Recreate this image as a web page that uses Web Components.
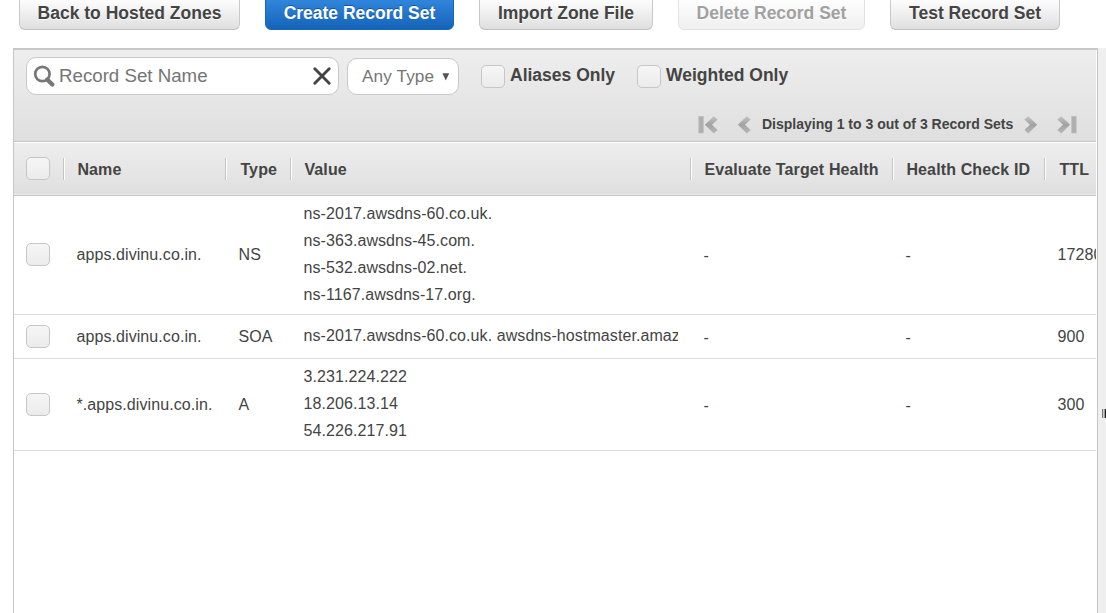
<!DOCTYPE html>
<html lang="en">
<head>
<meta charset="utf-8">
<title>Record Sets</title>
<style>
html, body { margin: 0; height: 100%; overflow: hidden; background: #fff; }
body { font-family: "Liberation Sans", Arial, sans-serif; color: #444; }
</style>
</head>
<body>
<zone-page></zone-page>
<script>
function define(name, markup) {
  const t = document.createElement('template');
  t.innerHTML = markup;
  customElements.define(name, class extends HTMLElement {
    constructor() {
      super();
      this.attachShadow({ mode: 'open' }).append(t.content.cloneNode(true));
    }
  });
}

define('action-button', `
<style>
:host { display: flex; box-sizing: border-box; height: 36px; padding: 5px 0 0 0; justify-content: center; align-items: flex-start;
  font: bold 17.5px/26px "Liberation Sans", Arial, sans-serif; color: #444; white-space: nowrap;
  border: 1px solid #c9c9c9; border-bottom-color: #bfbfbf; border-radius: 6px;
  background: linear-gradient(#fff, #fbfbfb 20%, #dfdfdf); text-shadow: 0 1px 0 #fff; }
:host([primary]) { color: #fff; border-color: #1568bd; background: linear-gradient(#3287dd, #2f83d9 20%, #1463b9); text-shadow: 0 -1px 0 #1158a5; }
:host([disabled]) { color: #a1a1a1; border-color: #e3e3e3; background: linear-gradient(#fff, #fdfdfd 20%, #efefef); }
</style><slot></slot>`);

define('check-box', `
<style>
:host { display: block; box-sizing: border-box; width: 24px; height: 23px; border: 1px solid #c6c6c6; border-radius: 5px;
  background: linear-gradient(#f6f6f6, #ebebeb); flex: none; }
</style>`);

define('search-field', `
<style>
:host { display: flex; box-sizing: border-box; width: 313px; height: 38px; border: 1px solid #c9c9c9; border-radius: 10px; background: #fff; align-items: center; padding: 0 6px 0 6px; }
span { flex: 1; padding-left: 4px; color: #757575; font-size: 18.7px; line-height: 36px; height: 36px; white-space: nowrap; }
svg { display: block; flex: none; }
</style>
<svg width="22" height="24" viewBox="0 0 22 24"><circle cx="9.4" cy="10" r="7.2" fill="none" stroke="#777" stroke-width="2.7"/><path d="M14.2 15.5L19.3 20.5" stroke="#777" stroke-width="4.2" stroke-linecap="round"/></svg>
<span><slot></slot></span>
<svg width="20" height="20" viewBox="0 0 20 20"><path d="M2.8 2.8L17.2 17.2M17.2 2.8L2.8 17.2" stroke="#444" stroke-width="2.9" stroke-linecap="round"/></svg>`);

define('type-select', `
<style>
:host { display: flex; box-sizing: border-box; width: 112px; height: 37px; border: 1px solid #c9c9c9; border-radius: 10px; background: #fff; padding: 0 0 0 14px; font-size: 17.2px; line-height: 35px; color: #757575; white-space: nowrap; letter-spacing: .1px; }
svg { margin: 14px 0 0 8px; }
</style><slot></slot><svg width="8" height="8" viewBox="0 0 8 8"><path d="M.4 .2H7.2L3.8 7.5Z" fill="#555"/></svg>`);

define('page-arrow', `
<style>
:host { display: block; width: 20px; height: 18px; }
:host([flip]) { transform: scaleX(-1); }
rect { display: none; }
:host([end]) rect { display: block; }
svg { display: block; }
</style>
<svg width="20" height="18" viewBox="0 0 20 18">
<defs><linearGradient id="g" x1="0" y1="0" x2="0" y2="1"><stop offset="0" stop-color="#c2c2c2"/><stop offset=".5" stop-color="#a2a2a2"/><stop offset="1" stop-color="#b8b8b8"/></linearGradient></defs>
<rect x=".8" y=".5" width="4.5" height="16.5" fill="#afafaf" stroke="#bdbdbd" stroke-width=".7"/>
<path d="M15.8 .3L19.6 3.6L14 8.8L19.6 14L15.8 17.4L6.8 8.8Z" fill="url(#g)"/></svg>`);

define('filter-bar', `
<style>
:host { display: block; box-sizing: border-box; height: 91px; padding: 7px 0 0 12px; background: linear-gradient(#eee, #dfdfdf); }
.filters { display: flex; height: 38px; }
type-select { margin: 1px 22px 0 8px; }
check-box { margin-top: 8px; }
b { font-size: 17.5px; line-height: 20px; padding-top: 8px; white-space: nowrap; }
.first { margin-left: 5px; width: 127px; }
.second { margin-left: 5px; }
.pager { display: flex; justify-content: flex-start; padding-left: 672px; margin-top: 21px; }
.count { width: 252px; margin: 0 10px 0 11px; font: bold 14px/17px "Liberation Sans", Arial, sans-serif; white-space: nowrap; }
.gap { margin-left: 13px; } .gap2 { margin-left: 13px; }
</style>
<div class="filters"><search-field>Record Set Name</search-field><type-select>Any Type</type-select>
<check-box></check-box><b class="first">Aliases Only</b><check-box></check-box><b class="second">Weighted Only</b></div>
<div class="pager"><page-arrow end></page-arrow><page-arrow class="gap"></page-arrow><div class="count">Displaying 1 to 3 out of 3 Record Sets</div>
<page-arrow flip></page-arrow><page-arrow flip end class="gap2"></page-arrow></div>`);

define('table-head', `
<style>
:host { display: grid; grid-template-columns: 49px 162px 65px 400px 202px 152px 90px; box-sizing: border-box; height: 55px; padding-top: 15px;
  border-top: 1px solid #c6c6c6; border-bottom: 1px solid #c6c6c6; box-shadow: inset 0 1px #fff, inset 0 -1px #e8e8e8;
  background: linear-gradient(#eee, #dfdfdf); font: bold 16px/26px "Liberation Sans", Arial, sans-serif; letter-spacing: .13px; }
div { height: 22px; margin-top: 1px; line-height: 24px; white-space: nowrap; border-left: 1px solid #c4c4c4; box-shadow: inset 1px 0 #fff; padding-left: 13.4px; }
.pick { padding-left: 12px; border: 0; box-shadow: none; margin-top: 0; }
</style>
<div class="pick"><check-box></check-box></div><div>Name</div><div style="padding-left:14.4px">Type</div><div>Value</div><div>Evaluate Target Health</div><div>Health Check ID</div><div style="padding-left:14.4px">TTL</div>`);

define('record-row', `
<style>
:host { display: grid; grid-template-columns: 62px 162px 65px 400px 202px 152px 90px; align-items: center; box-sizing: border-box; border-bottom: 1px solid #ddd; padding: 4px 0 6px; min-height: 44px; font-size: 16px; line-height: 27px; white-space: nowrap; letter-spacing: .08px; --drop: 1px; }
:host([tall]) { --drop: 0px; }
check-box { margin-left: 12px; position: relative; top: var(--drop); }
.value { width: 374.5px; overflow: hidden; }
div { padding-left: .5px; }
.mid { position: relative; top: var(--drop); }
.dash { padding-top: 2px; }
</style>
<check-box></check-box><div class="mid"><slot name="name"></slot></div><div class="mid"><slot name="type"></slot></div><div class="value"><slot name="value"></slot></div>
<div class="mid dash">-</div><div class="mid dash">-</div><div class="mid"><slot name="ttl"></slot></div>`);

define('record-panel', `
<style>
:host { display: flex; height: 565px; margin-left: 13px; margin-top: 18px; }
.main { box-sizing: border-box; width: 1085px; height: 565px; border: 1px solid #c6c6c6; border-top: 2px solid #c6c8c6; border-bottom: 0; padding-right: 1px; }
.clip { overflow: hidden; width: 1082px; }
.side { box-sizing: border-box; width: 8px; height: 565px; background: #efefef; padding: 361px 0 0 4px; }
svg { display: block; }
</style>
<div class="main"><div class="clip"><filter-bar></filter-bar><table-head></table-head>
<record-row tall><span slot="name">apps.divinu.co.in.</span><span slot="type">NS</span><span slot="value">ns-2017.awsdns-60.co.uk.<br>ns-363.awsdns-45.com.<br>ns-532.awsdns-02.net.<br>ns-1167.awsdns-17.org.</span><span slot="ttl">17280</span></record-row>
<record-row><span slot="name">apps.divinu.co.in.</span><span slot="type">SOA</span><span slot="value">ns-2017.awsdns-60.co.uk. awsdns-hostmaster.amaz</span><span slot="ttl">900</span></record-row>
<record-row><span slot="name">*.apps.divinu.co.in.</span><span slot="type">A</span><span slot="value">3.231.224.222<br>18.206.13.14<br>54.226.217.91</span><span slot="ttl">300</span></record-row>
</div></div>
<div class="side"><svg width="4" height="9"><path fill="#777" d="M0 0h1v9H0z"/><path fill="#ccc" d="M1 0h1v9H1z"/><path fill="#999" d="M2 0h1v9H2z"/><path fill="#222" d="M3 0h1v9H3z"/></svg></div>`);

define('zone-page', `
<style>
:host { display: block; width: 1106px; height: 613px; overflow: hidden; }
nav { display: flex; margin: -6px 0 0 19px; gap: 25px; }
</style>
<nav><action-button style="width:221px">Back to Hosted Zones</action-button><action-button primary style="width:189px">Create Record Set</action-button><action-button style="width:174px">Import Zone File</action-button><action-button disabled style="width:187px">Delete Record Set</action-button><action-button style="width:170px">Test Record Set</action-button></nav>
<record-panel></record-panel>`);
</script>
</body>
</html>
